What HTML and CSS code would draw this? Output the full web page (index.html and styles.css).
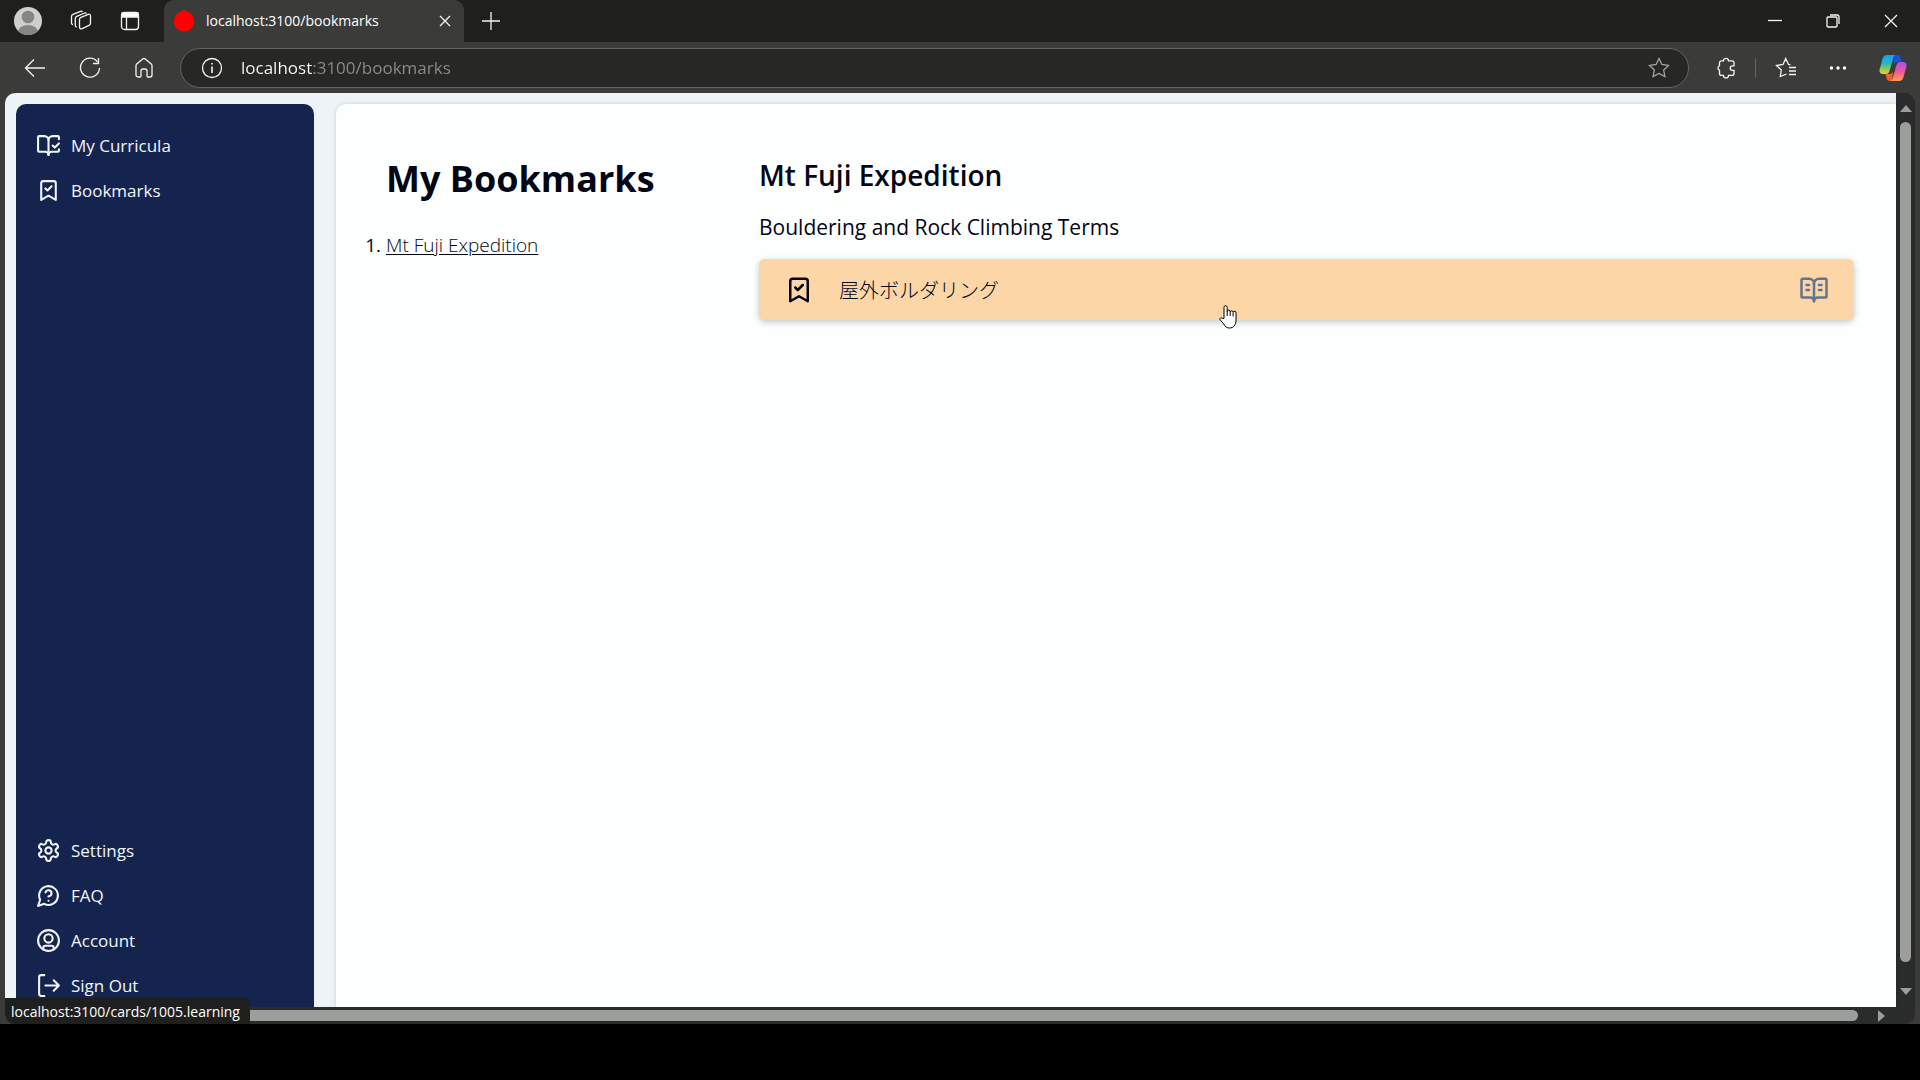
FILE: index.html
```html
<!DOCTYPE html>
<html lang="en">
<head>
<meta charset="utf-8">
<title>localhost:3100/bookmarks</title>
<link rel="stylesheet" href="styles.css">
</head>
<body>
<div class="window">
  <header class="tabbar">
    <div class="tab-tools">
      <button class="icon-btn" aria-label="Profile">
        <svg width="28" height="28" viewBox="0 0 28 28"><defs><clipPath id="avatar"><circle cx="14" cy="14" r="14"/></clipPath></defs><g clip-path="url(#avatar)"><rect width="28" height="28" fill="#cfcfcd"/><circle cx="14" cy="10" r="6.3" fill="#868684"/><ellipse cx="14" cy="25" rx="10" ry="7" fill="#868684"/></g></svg>
      </button>
      <button class="icon-btn" aria-label="Workspaces">
        <svg class="line" width="22" height="22" viewBox="0 0 22 22"><path d="M9.500 9.500a2.400 2.400 0 0 1 1.500-2.200l7.300-3A1.600 1.600 0 0 1 20.500 5.800v7.400a2.400 2.400 0 0 1-1.500 2.200l-7.300 3.400a1.600 1.600 0 0 1-2.200-1.500zM6.800 17a1.600 1.600 0 0 1-1.500-1.600V8.500a2.400 2.400 0 0 1 1.500-2.200l7.700-3.300a1.600 1.600 0 0 1 2 .6M3 14.500a1.600 1.600 0 0 1-1.500-1.700V6.500A2.400 2.400 0 0 1 3 4.300l7.500-3a1.600 1.600 0 0 1 2 .6"/></svg>
      </button>
      <button class="icon-btn" aria-label="Tab actions">
        <svg class="line" width="20" height="20" viewBox="0 0 20 20"><rect x="1.500" y="1.500" width="17" height="17" rx="3"/><path d="M2 2h16v4H2z" fill="#fff"/><path d="M6.500 6v12"/></svg>
      </button>
    </div>
    <div class="tab">
      <svg width="20" height="22" viewBox="0 0 20 22"><path d="M10 0c2 1 3 1.500 5 2.500 3 1.500 5 5 5 8.500 0 6-4 10.500-10 10.500S0 17 0 11c0-3.500 2-7 5-8.500C7 1.500 8 1 10 0z" fill="#f00"/></svg>
      <span class="tab-title">localhost:3100/bookmarks</span>
      <button class="icon-btn" aria-label="Close tab"><svg class="line" width="12" height="12" viewBox="0 0 12 12"><path d="M1 1l10 10M11 1 1 11"/></svg></button>
    </div>
    <button class="icon-btn new-tab" aria-label="New tab"><svg class="line" width="18" height="18" viewBox="0 0 18 18"><path d="M9 0v18M0 9h18"/></svg></button>
    <div class="window-buttons">
      <button class="icon-btn" aria-label="Minimize"><svg class="line" width="14" height="14" viewBox="0 0 14 14"><path d="M0 6.500h14"/></svg></button>
      <button class="icon-btn" aria-label="Restore"><svg class="line" width="14" height="14" viewBox="0 0 14 14"><rect x="1" y="3" width="10" height="10" rx="1"/><path d="M4 1h7a2 2 0 0 1 2 2v7"/></svg></button>
      <button class="icon-btn" aria-label="Close"><svg class="line" width="14" height="14" viewBox="0 0 14 14"><path d="M1 1l12 12M13 1 1 13"/></svg></button>
    </div>
  </header>

  <div class="toolbar">
    <div class="nav-buttons">
      <button class="icon-btn" aria-label="Back"><svg class="line" width="22" height="20" viewBox="0 0 22 20"><path d="M21 10H2M10 1.500 1.500 10l8.500 8.500"/></svg></button>
      <button class="icon-btn" aria-label="Refresh"><svg class="line" width="22" height="22" viewBox="0 0 22 22"><path d="M18.500 4.800A9.500 9.500 0 1 0 20.500 11M19.500 1v5.500H14"/></svg></button>
      <button class="icon-btn" aria-label="Home"><svg class="line" width="20" height="22" viewBox="0 0 20 22"><path d="M2 8.500a2 2 0 0 1 .7-1.500L8.700 2a2 2 0 0 1 2.600 0l6 5A2 2 0 0 1 18 8.500V18a2 2 0 0 1-2 2h-2a1 1 0 0 1-1-1v-5a2 2 0 0 0-2-2H9a2 2 0 0 0-2 2v5a1 1 0 0 1-1 1H4a2 2 0 0 1-2-2z"/></svg></button>
    </div>
    <div class="address">
      <button class="icon-btn" aria-label="Site information"><svg class="line" width="22" height="22" viewBox="0 0 22 22"><circle cx="11" cy="11" r="9.500"/><path d="M11 9.500v6.500M11 6v1.500" stroke-width="1.600"/></svg></button>
      <input class="url" type="text" aria-label="Address" value="localhost:3100/bookmarks">
      <button class="icon-btn" aria-label="Add to favorites"><svg class="line dim" width="22" height="22" viewBox="0 0 22 22"><path d="M11 1.500l2.900 6 6.600.9-4.800 4.600 1.200 6.500L11 16.400l-5.900 3.100L6.300 13 1.500 8.400l6.600-.9z"/></svg></button>
    </div>
    <div class="toolbar-end">
      <button class="icon-btn" aria-label="Extensions"><svg class="line" width="20" height="22" viewBox="0 0 20 22"><path d="M7.500 3.800a2.500 2.500 0 0 1 5 0H16a2 2 0 0 1 2 2v3h-1.500a2.300 2.300 0 0 0 0 4.600H18v3a2 2 0 0 1-2 2h-3.500a2.500 2.500 0 0 1-5 0H5.500a2 2 0 0 1-2-2v-3.200a2.500 2.500 0 0 1 0-4.600V5.800a2 2 0 0 1 2-2z"/></svg></button>
      <span class="divider"></span>
      <button class="icon-btn" aria-label="Favorites"><svg class="line" width="22" height="22" viewBox="0 0 22 22"><path d="M11.500 17 5.300 19.500 6.300 13 1.500 8.500 8 7.500l2.700-6 2.800 6 2 .3M14 10.500h7M14 14h7M14 17.500h7"/></svg></button>
      <button class="icon-btn" aria-label="Settings and more"><svg width="18" height="6" viewBox="0 0 18 6" fill="#fff"><circle cx="2.500" cy="3" r="1.700"/><circle cx="9" cy="3" r="1.700"/><circle cx="15.500" cy="3" r="1.700"/></svg></button>
      <button class="icon-btn" aria-label="Copilot">
        <svg width="28" height="28" viewBox="0 0 28 28">
          <defs>
            <linearGradient id="cool" x1="0" y1="0" x2="0" y2="1"><stop offset="0" stop-color="#18a0f0"/><stop offset=".45" stop-color="#28b8c0"/><stop offset=".75" stop-color="#8fce50"/><stop offset="1" stop-color="#f0d020"/></linearGradient>
            <linearGradient id="warm" x1="0" y1="0" x2="0" y2="1"><stop offset="0" stop-color="#a855e8"/><stop offset=".5" stop-color="#f0549c"/><stop offset="1" stop-color="#ffa050"/></linearGradient>
          </defs>
          <path d="M15 1h3c2 0 3 1 3.500 3l1 4h-4c-2 0-3 1-3.500 3z" fill="#1b50d8"/>
          <path d="M13 27h-2c-2 0-3-1-3.500-3l-1-4h4c2 0 3-1 3.500-3z" fill="#f06030"/>
          <path d="M8 1h9c-2 0-2.500 2-3 4l-3.500 12c-.6 2-1.800 3-3.500 3H4c-3 0-4-2.500-3.300-5L3.500 5C4.300 2.500 5.500 1 8 1z" fill="url(#cool)"/>
          <path d="M20 27h-9c2 0 2.500-2 3-4l3.500-12c.6-2 1.800-3 3.500-3h3c3 0 4 2.500 3.300 5l-2.800 10c-.8 2.500-2 4-4.500 4z" fill="url(#warm)"/>
        </svg>
      </button>
    </div>
  </div>

  <div class="viewport">
    <div class="page">
      <nav class="sidebar">
        <div class="menu">
          <a href="#curricula"><svg class="glyph" viewBox="0 0 24 24"><path d="M12 21V7M16 12l2 2 4-4"/><path d="M22 6V4a1 1 0 0 0-1-1h-5a4 4 0 0 0-4 4 4 4 0 0 0-4-4H3a1 1 0 0 0-1 1v13a1 1 0 0 0 1 1h6a3 3 0 0 1 3 3 3 3 0 0 1 3-3h6a1 1 0 0 0 1-1v-1.300"/></svg>My Curricula</a>
          <a href="#bookmarks"><svg class="glyph" viewBox="0 0 24 24"><path d="m19 21-7-4-7 4V5a2 2 0 0 1 2-2h10a2 2 0 0 1 2 2Z"/><path d="m9 10 2 2 4-4"/></svg>Bookmarks</a>
        </div>
        <div class="menu">
          <a href="#settings"><svg class="glyph" viewBox="0 0 24 24"><path d="M12.220 2h-.44a2 2 0 0 0-2 2v.18a2 2 0 0 1-1 1.730l-.43.25a2 2 0 0 1-2 0l-.15-.08a2 2 0 0 0-2.730.73l-.22.38a2 2 0 0 0 .73 2.730l.15.1a2 2 0 0 1 1 1.720v.51a2 2 0 0 1-1 1.740l-.15.09a2 2 0 0 0-.73 2.730l.22.38a2 2 0 0 0 2.730.73l.15-.08a2 2 0 0 1 2 0l.43.25a2 2 0 0 1 1 1.730V20a2 2 0 0 0 2 2h.44a2 2 0 0 0 2-2v-.18a2 2 0 0 1 1-1.730l.43-.25a2 2 0 0 1 2 0l.15.08a2 2 0 0 0 2.730-.73l.22-.39a2 2 0 0 0-.73-2.730l-.15-.08a2 2 0 0 1-1-1.740v-.5a2 2 0 0 1 1-1.740l.15-.09a2 2 0 0 0 .73-2.730l-.22-.38a2 2 0 0 0-2.730-.73l-.15.08a2 2 0 0 1-2 0l-.43-.25a2 2 0 0 1-1-1.730V4a2 2 0 0 0-2-2z"/><circle cx="12" cy="12" r="3"/></svg>Settings</a>
          <a href="#faq"><svg class="glyph" viewBox="0 0 24 24"><path d="M7.900 20A9 9 0 1 0 4 16.100L2 22Z"/><path d="M9.090 9a3 3 0 0 1 5.830 1c0 2-3 3-3 3M12 17h.01"/></svg>FAQ</a>
          <a href="#account"><svg class="glyph" viewBox="0 0 24 24"><circle cx="12" cy="12" r="10"/><circle cx="12" cy="10" r="4"/><path d="M7 20.660V19a2 2 0 0 1 2-2h6a2 2 0 0 1 2 2v1.660"/></svg>Account</a>
          <a href="#signout"><svg class="glyph" viewBox="0 0 24 24"><path d="M8 2H5a2 2 0 0 0-2 2v16a2 2 0 0 0 2 2h3M17 17l5-5-5-5M22 12H9"/></svg>Sign Out</a>
        </div>
      </nav>
      <main class="main">
        <section class="index">
          <h1>My Bookmarks</h1>
          <ol><li><a href="#fuji">Mt Fuji Expedition</a></li></ol>
        </section>
        <section class="detail" id="fuji">
          <h2>Mt Fuji Expedition</h2>
          <h3>Bouldering and Rock Climbing Terms</h3>
          <div class="card">
            <button class="icon-btn" aria-label="Remove bookmark"><svg class="glyph large" viewBox="0 0 24 24"><path d="m19 21-7-4-7 4V5a2 2 0 0 1 2-2h10a2 2 0 0 1 2 2Z"/><path d="m9 10 2 2 4-4"/></svg></button>
            <span class="term" lang="ja">屋外ボルダリング</span>
            <a class="learn" href="#learning" aria-label="Learning"><svg class="glyph large" viewBox="0 0 24 24"><path d="M12 7v14M16 12h2M16 8h2M6 12h2M6 8h2"/><path d="M3 18a1 1 0 0 1-1-1V4a1 1 0 0 1 1-1h5a4 4 0 0 1 4 4 4 4 0 0 1 4-4h5a1 1 0 0 1 1 1v13a1 1 0 0 1-1 1h-6a3 3 0 0 0-3 3 3 3 0 0 0-3-3z"/></svg></a>
            <svg class="cursor" width="18" height="24" viewBox="0 0 18 24"><path d="M5 13.500V2.300a1.600 1.600 0 0 1 3.200 0V6.500a1.500 1.500 0 0 1 3 .3 1.500 1.500 0 0 1 2.900.5 1.400 1.400 0 0 1 2.900.9V15c0 5-2.500 8-6.500 8-3 0-4.500-1.500-5.800-4L1 14.500c-.5-1.300 1-2.200 2.200-1.200z" fill="#fff" stroke="#000"/><path d="M8.200 6v5M11.200 6.800V11M14.100 7.500v4" stroke="#000"/></svg>
          </div>
        </section>
      </main>
    </div>
    <div class="scroll-y"><i class="arrow up"></i><i class="thumb"></i><i class="arrow down"></i></div>
    <div class="scroll-x"><i class="thumb"></i><i class="arrow right"></i></div>
    <div class="status">localhost:3100/cards/1005.learning</div>
  </div>
</div>
</body>
</html>
```
FILE: styles.css
```css
* { box-sizing: border-box; }

body {
  margin: 0;
  height: 100vh;
  padding-bottom: 56px;
  background: #000;
  color: #020617;
  font-family: "Open Sans", "Noto Sans", "Noto Sans CJK JP", sans-serif;
  overflow: hidden;
}

.window {
  height: 100%;
  display: flex;
  flex-direction: column;
  background: #3b3c3a;
}

.icon-btn {
  display: flex;
  align-items: center;
  justify-content: center;
  flex: none;
  padding: 0;
  border: 0;
  background: none;
  color: inherit;
}

svg { display: block; flex: none; }
.line { fill: none; stroke: #f4f4f2; stroke-width: 1.3; }
.dim { stroke: #a4a5a3; }

/* Tab strip */
.tabbar {
  display: flex;
  align-items: center;
  height: 42px;
  background: #1f201e;
  color: #fff;
}
.tab-tools {
  display: flex;
  align-items: center;
  justify-content: space-between;
  width: 164px;
  padding: 0 24px 0 14px;
}
.tab {
  display: flex;
  align-items: center;
  gap: 12px;
  width: 300px;
  height: 42px;
  padding: 0 13px 0 10px;
  border-radius: 10px 10px 0 0;
  background: #3b3c3a;
}
.tab-title { flex: 1; font-size: 14px; line-height: 20px; white-space: nowrap; }
.new-tab { margin-left: 18px; }
.window-buttons { display: flex; gap: 44px; margin-left: auto; padding-right: 22px; }

/* Toolbar */
.toolbar {
  display: flex;
  align-items: center;
  height: 51px;
}
.nav-buttons { display: flex; align-items: center; gap: 33px; width: 180px; padding-left: 24px; }
.address {
  display: flex;
  align-items: center;
  gap: 18px;
  flex: 1;
  height: 40px;
  padding: 0 18px 0 20px;
  border: 1px solid #656664;
  border-radius: 20px;
  background: #272826;
}
.url {
  flex: 1;
  min-width: 0;
  height: 28px;
  padding: 0;
  border: 0;
  outline: 0;
  font: 17px/28px "Open Sans", "Noto Sans", sans-serif;
  color: #8c8d8b;
  background: linear-gradient(90deg, #fff 72px, #8c8d8b 72px);
  -webkit-background-clip: text;
  background-clip: text;
  -webkit-text-fill-color: transparent;
}
.toolbar-end { display: flex; align-items: center; gap: 19px; padding: 0 13px 0 27px; }
.toolbar-end .icon-btn:nth-last-child(-n+2) { margin-left: 13px; }
.divider { width: 1px; height: 20px; background: #666765; }

/* Page area with its scroll bars */
.viewport {
  position: relative;
  flex: 1;
  min-height: 0;
  display: grid;
  grid-template-columns: 1fr 19px;
  grid-template-rows: 1fr 17px;
  margin: 0 5px;
  border-radius: 10px;
  overflow: hidden;
  background: #2a2c2b;
}
.page {
  display: flex;
  gap: 22px;
  min-height: 0;
  padding: 11px 0 0 11px;
  background: #edf3f7;
}
.scroll-y {
  grid-row: 1;
  grid-column: 2;
  display: flex;
  flex-direction: column;
  align-items: center;
  padding: 12px 0;
  gap: 10px;
}
.scroll-x { grid-column: 1; display: flex; align-items: center; gap: 20px; padding-right: 11px; }
.thumb { background: #9c9e9b; border-radius: 6px; }
.scroll-y .thumb { width: 11px; flex: 1; margin-bottom: 16px; }
.scroll-x .thumb { height: 11px; flex: 1; }
.arrow { border: 6px solid transparent; }
.up { border-top: 0; border-bottom: 7px solid #9c9e9b; }
.down { border-bottom: 0; border-top: 7px solid #9c9e9b; }
.right { border-right: 0; border-left: 7px solid #9c9e9b; }

.status {
  position: absolute;
  left: 0;
  bottom: 0;
  height: 26px;
  padding: 0 10px 0 6px;
  border-top-right-radius: 4px;
  background: #1f201e;
  color: #fff;
  font-size: 14px;
  line-height: 27px;
}

/* Side menu */
.sidebar {
  display: flex;
  flex-direction: column;
  justify-content: space-between;
  flex: none;
  width: 298px;
  padding-top: 18px;
  border-radius: 10px 10px 0 0;
  background: #15244e;
}
.menu { display: flex; flex-direction: column; }
.menu a {
  display: flex;
  align-items: center;
  gap: 10px;
  height: 45px;
  padding: 2px 0 0 20px;
  color: #f1f5f9;
  font-size: 17px;
  line-height: 24px;
  text-decoration: none;
}
.glyph {
  width: 25px;
  height: 25px;
  fill: none;
  stroke: currentColor;
  stroke-width: 2;
  stroke-linecap: round;
  stroke-linejoin: round;
}
.large { width: 30px; height: 30px; }

/* Content */
.main {
  display: flex;
  flex: 1;
  padding: 50px 42px 0 50px;
  border-radius: 10px 0 0 0;
  background: #fdfffe;
  box-shadow: 0 0 4px rgba(15, 23, 42, 0.16);
}
.index { width: 373px; flex: none; }
.index h1 { margin: 0; font-size: 36px; line-height: 50px; font-weight: 700; }
.index ol { margin: 26px 0 0; padding: 0; font-size: 19px; line-height: 30px; }
.index a { color: inherit; font-weight: 300; text-underline-offset: 2px; }
.detail { flex: 1; min-width: 0; }
.detail h2 { margin: 0; font-size: 28px; line-height: 42px; font-weight: 600; }
.detail h3 { margin: 14px 0 0; font-size: 21px; line-height: 34px; font-weight: 400; }
.card {
  position: relative;
  display: flex;
  align-items: center;
  gap: 25px;
  height: 61px;
  margin-top: 15px;
  padding: 0 25px;
  border-radius: 6px;
  background: #fcd6a7;
  box-shadow: 0 2px 6px rgba(15, 23, 42, 0.25);
}
.term { flex: 1; font-size: 20px; line-height: 30px; font-weight: 300; font-family: "Noto Sans CJK JP", sans-serif; }
.learn { color: #64748b; }
.cursor { position: absolute; left: 42%; top: 46px; }
```
